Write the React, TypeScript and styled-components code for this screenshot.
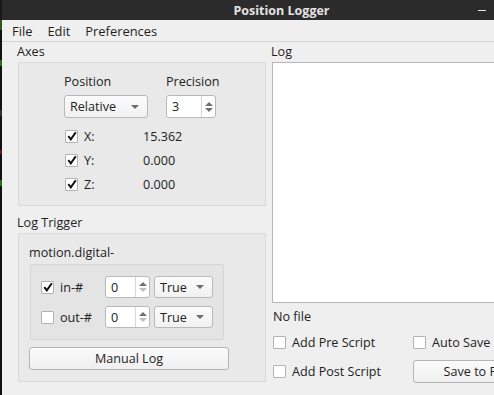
import React from "react";
import styled, { createGlobalStyle } from "styled-components";

const GlobalStyle = createGlobalStyle`
  html, body {
    margin: 0;
    padding: 0;
    width: 494px;
    height: 395px;
    overflow: hidden;
    background: #111;
  }
  body {
    font-family: "Open Sans", "Noto Sans", sans-serif;
    font-size: 12.6px;
    color: #222;
  }
`;

const Screen = styled.div`
  display: flex;
  height: 395px;
`;

const DesktopStrip = styled.div`
  width: 2px;
  flex-shrink: 0;
  background: linear-gradient(
    #1a1a1a 0 20px,
    #2a5a1a 20px 30px,
    #111 30px 60px,
    #2d6b1c 60px 66px,
    #111 66px 110px,
    #3a2a40 110px 116px,
    #111 116px 150px,
    #6a1a1a 150px 154px,
    #111 154px 180px,
    #2d6b1c 180px 186px,
    #111 186px
  );
`;

const Window = styled.div`
  width: 559px;
  flex-shrink: 0;
  display: flex;
  flex-direction: column;
  background: #efefef;
`;

const TitleBar = styled.div`
  height: 20px;
  background: #2b2b2b;
  display: grid;
  grid-template-columns: 1fr auto 1fr;
  align-items: center;
`;

const Title = styled.div`
  grid-column: 2;
  color: #e4e4e4;
  font-family: "Open Sans", sans-serif;
  font-weight: 700;
  font-size: 12.5px;
`;

const WindowButtons = styled.div`
  grid-column: 3;
  display: flex;
  justify-content: flex-end;
  padding-right: 9px;
`;

const WinButton = styled.div`
  width: 28px;
  height: 20px;
  display: flex;
  align-items: center;
  justify-content: center;
`;

const MinDash = styled.div`
  width: 8px;
  height: 1px;
  background: #e8e8e8;
`;

const MenuBar = styled.div`
  height: 21px;
  display: flex;
  align-items: center;
  gap: 15px;
  padding-left: 10px;
  border-bottom: 1px solid #d4d4d4;
  font-size: 12.9px;
`;

const MenuItem = styled.span`
  color: #1e1e1e;
`;

const Content = styled.div`
  display: flex;
  gap: 6px;
  padding-left: 16px;
`;

const LeftColumn = styled.div`
  width: 248px;
  display: flex;
  flex-direction: column;
`;

const RightColumn = styled.div`
  flex: 1;
  display: flex;
  flex-direction: column;
`;

const SectionLabel = styled.div<{ $top?: number }>`
  height: 20px;
  line-height: 20px;
  margin-top: ${(p) => p.$top ?? 0}px;
  margin-left: -1px;
  color: #1e1e1e;
`;

const GroupBox = styled.div<{ $height: number }>`
  height: ${(p) => p.$height}px;
  box-sizing: border-box;
  border: 1px solid #d9d9d9;
  border-radius: 2px;
  background: #e9e9e9;
`;

const AxesGrid = styled.div`
  display: grid;
  grid-template-columns: 102px auto;
  padding: 10px 0 0 45px;
  row-gap: 4px;
`;

const ColLabel = styled.div`
  height: 18px;
  line-height: 18px;
`;

const AxisRows = styled.div`
  display: flex;
  flex-direction: column;
  padding: 6px 0 0 46px;
`;

const AxisRow = styled.div`
  height: 24px;
  display: grid;
  grid-template-columns: 19px 59px auto;
  align-items: center;
`;

const CheckBoxBox = styled.div`
  width: 11px;
  height: 11px;
  border: 1px solid #b3b3b3;
  border-radius: 1px;
  background: #fff;
  display: flex;
  align-items: center;
  justify-content: center;
  box-sizing: content-box;
`;

const CheckRow = styled.div<{ $gap?: number }>`
  display: flex;
  align-items: center;
  gap: ${(p) => p.$gap ?? 6}px;
`;

const CheckBox: React.FC<{ checked?: boolean }> = ({ checked }) => (
  <CheckBoxBox>
    {checked && (
      <svg width="10" height="10" viewBox="0 0 10 10">
        <path
          d="M1.3 5.2 L3.8 8.4 L8.8 1.2"
          fill="none"
          stroke="#111"
          strokeWidth="2"
          strokeLinejoin="miter"
        />
      </svg>
    )}
  </CheckBoxBox>
);

const ComboBox = styled.div<{ $width: number; $height?: number }>`
  width: ${(p) => p.$width}px;
  height: ${(p) => p.$height ?? 23}px;
  box-sizing: border-box;
  border: 1px solid #b9b9b9;
  border-radius: 3px;
  background: linear-gradient(#fbfbfb, #f1f1f1);
  display: flex;
  align-items: center;
  justify-content: space-between;
  padding: 0 8px 0 5px;
`;

const DownArrow = styled.div`
  width: 0;
  height: 0;
  border-left: 4px solid transparent;
  border-right: 4px solid transparent;
  border-top: 4px solid #6b6b6b;
`;

const SpinBox = styled.div<{ $width: number; $height?: number }>`
  width: ${(p) => p.$width}px;
  height: ${(p) => p.$height ?? 23}px;
  box-sizing: border-box;
  border: 1px solid #b9b9b9;
  border-radius: 3px;
  background: #fff;
  display: flex;
`;

const SpinValue = styled.div`
  flex: 1;
  display: flex;
  align-items: center;
  padding-left: 5px;
`;

const SpinArrows = styled.div`
  width: 13px;
  border-left: 1px solid #d6d6d6;
  display: flex;
  flex-direction: column;
  align-items: center;
  justify-content: center;
  gap: 2px;
`;

const UpTri = styled.div<{ $dim?: boolean }>`
  width: 0;
  height: 0;
  border-left: 4px solid transparent;
  border-right: 4px solid transparent;
  border-bottom: 4px solid ${(p) => (p.$dim ? "#bdbdbd" : "#707070")};
`;

const DownTri = styled.div<{ $dim?: boolean }>`
  width: 0;
  height: 0;
  border-left: 4px solid transparent;
  border-right: 4px solid transparent;
  border-top: 4px solid ${(p) => (p.$dim ? "#bdbdbd" : "#707070")};
`;

const TriggerBody = styled.div`
  display: flex;
  flex-direction: column;
  padding: 9px 0 0 10px;
`;

const SubLabel = styled.div`
  height: 20px;
  line-height: 20px;
  margin-bottom: 1px;
`;

const InnerBox = styled.div`
  width: 194px;
  height: 76px;
  box-sizing: border-box;
  margin-left: 1px;
  border: 1px solid #d6d6d6;
  border-radius: 2px;
  background: #e4e4e4;
  display: flex;
  flex-direction: column;
  gap: 8px;
  padding: 11px 0 0 10px;
`;

const TriggerRow = styled.div`
  height: 22px;
  display: grid;
  grid-template-columns: 64px 49px auto;
  align-items: center;
`;

const PushButton = styled.div<{ $width: number; $top?: number }>`
  width: ${(p) => p.$width}px;
  height: 23px;
  margin-top: ${(p) => p.$top ?? 0}px;
  box-sizing: border-box;
  border: 1px solid #b5b5b5;
  border-radius: 3px;
  background: linear-gradient(#fbfbfb, #efefef);
  display: flex;
  align-items: center;
  justify-content: center;
  color: #1e1e1e;
  white-space: nowrap;
`;

const LogArea = styled.div`
  height: 241px;
  box-sizing: border-box;
  border: 1px solid #b7b7b7;
  background: #fff;
`;

const FileLabel = styled.div`
  height: 28px;
  line-height: 28px;
  margin-left: 1px;
`;

const OptionsGrid = styled.div`
  display: grid;
  grid-template-columns: 140px auto;
  grid-auto-rows: 29px;
  align-items: center;
  margin-left: 1px;
  margin-top: -3px;
`;

export default function App() {
  return (
    <>
      <GlobalStyle />
      <Screen>
        <DesktopStrip />
        <Window>
          <TitleBar>
            <Title>Position Logger</Title>
            <WindowButtons>
              <WinButton>
                <MinDash />
              </WinButton>
              <WinButton />
              <WinButton />
            </WindowButtons>
          </TitleBar>
          <MenuBar>
            <MenuItem>File</MenuItem>
            <MenuItem>Edit</MenuItem>
            <MenuItem>Preferences</MenuItem>
          </MenuBar>
          <Content>
            <LeftColumn>
              <SectionLabel>Axes</SectionLabel>
              <GroupBox $height={144}>
                <AxesGrid>
                  <ColLabel>Position</ColLabel>
                  <ColLabel>Precision</ColLabel>
                  <ComboBox $width={84}>
                    <span>Relative</span>
                    <DownArrow />
                  </ComboBox>
                  <SpinBox $width={50}>
                    <SpinValue>3</SpinValue>
                    <SpinArrows>
                      <UpTri />
                      <DownTri />
                    </SpinArrows>
                  </SpinBox>
                </AxesGrid>
                <AxisRows>
                  <AxisRow>
                    <CheckBox checked />
                    <span>X:</span>
                    <span>15.362</span>
                  </AxisRow>
                  <AxisRow>
                    <CheckBox checked />
                    <span>Y:</span>
                    <span>0.000</span>
                  </AxisRow>
                  <AxisRow>
                    <CheckBox checked />
                    <span>Z:</span>
                    <span>0.000</span>
                  </AxisRow>
                </AxisRows>
              </GroupBox>
              <SectionLabel $top={7}>Log Trigger</SectionLabel>
              <GroupBox $height={149}>
                <TriggerBody>
                  <SubLabel>motion.digital-</SubLabel>
                  <InnerBox>
                    <TriggerRow>
                      <CheckRow>
                        <CheckBox checked />
                        <span>in-#</span>
                      </CheckRow>
                      <SpinBox $width={45} $height={22}>
                        <SpinValue>0</SpinValue>
                        <SpinArrows>
                          <UpTri />
                          <DownTri $dim />
                        </SpinArrows>
                      </SpinBox>
                      <ComboBox $width={59} $height={22}>
                        <span>True</span>
                        <DownArrow />
                      </ComboBox>
                    </TriggerRow>
                    <TriggerRow>
                      <CheckRow>
                        <CheckBox />
                        <span>out-#</span>
                      </CheckRow>
                      <SpinBox $width={45} $height={22}>
                        <SpinValue>0</SpinValue>
                        <SpinArrows>
                          <UpTri />
                          <DownTri $dim />
                        </SpinArrows>
                      </SpinBox>
                      <ComboBox $width={59} $height={22}>
                        <span>True</span>
                        <DownArrow />
                      </ComboBox>
                    </TriggerRow>
                  </InnerBox>
                  <PushButton $width={200} $top={7}>
                    Manual Log
                  </PushButton>
                </TriggerBody>
              </GroupBox>
            </LeftColumn>
            <RightColumn>
              <SectionLabel>Log</SectionLabel>
              <LogArea />
              <FileLabel>No file</FileLabel>
              <OptionsGrid>
                <CheckRow>
                  <CheckBox />
                  <span>Add Pre Script</span>
                </CheckRow>
                <CheckRow>
                  <CheckBox />
                  <span>Auto Save</span>
                </CheckRow>
                <CheckRow>
                  <CheckBox />
                  <span>Add Post Script</span>
                </CheckRow>
                <PushButton $width={127}>Save to File</PushButton>
              </OptionsGrid>
            </RightColumn>
          </Content>
        </Window>
      </Screen>
    </>
  );
}
